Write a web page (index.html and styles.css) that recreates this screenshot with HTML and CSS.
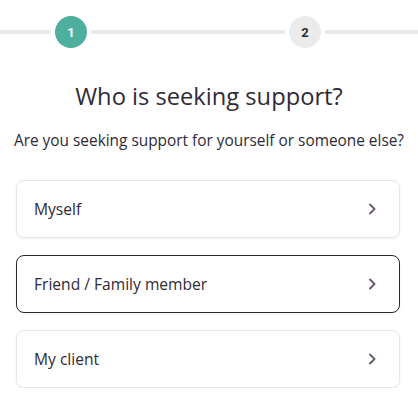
FILE: index.html
```html
<!DOCTYPE html>
<html lang="en">
<head>
<meta charset="utf-8">
<title>Who is seeking support?</title>
<link rel="stylesheet" href="styles.css">
</head>
<body>
<div class="page">
  <div class="stepper">
    <div class="line line-start"></div>
    <div class="step step-active">1</div>
    <div class="line line-mid"></div>
    <div class="step">2</div>
    <div class="line line-end"></div>
  </div>
  <h1 class="title">Who is seeking support?</h1>
  <p class="subtitle">Are you seeking support for yourself or someone else?</p>
  <div class="options">
    <button class="option">
      <span>Myself</span>
      <svg class="chev" width="10" height="14" viewBox="0 0 10 14"><path d="M3 2.5 L7.5 7 L3 11.5" fill="none" stroke="#6d5b74" stroke-width="2" stroke-linecap="round" stroke-linejoin="round"/></svg>
    </button>
    <button class="option option-selected">
      <span>Friend / Family member</span>
      <svg class="chev" width="10" height="14" viewBox="0 0 10 14"><path d="M3 2.5 L7.5 7 L3 11.5" fill="none" stroke="#6d5b74" stroke-width="2" stroke-linecap="round" stroke-linejoin="round"/></svg>
    </button>
    <button class="option">
      <span>My client</span>
      <svg class="chev" width="10" height="14" viewBox="0 0 10 14"><path d="M3 2.5 L7.5 7 L3 11.5" fill="none" stroke="#6d5b74" stroke-width="2" stroke-linecap="round" stroke-linejoin="round"/></svg>
    </button>
  </div>
</div>
</body>
</html>
```
FILE: styles.css
```css
* { box-sizing: border-box; }
html, body { margin: 0; padding: 0; background: #ffffff; }
body { font-family: "Open Sans", "Lato", sans-serif; color: #2f2a36; }
.page { width: 418px; padding-top: 16px; }
.stepper { display: flex; align-items: center; height: 32px; }
.line { height: 4px; background: #e9e9ea; }
.line-start { width: 51px; margin-right: 4px; }
.line-mid { flex: 1; margin: 0 4px; }
.line-end { width: 93px; margin-left: 4px; }
.step {
  width: 32px; height: 32px; border-radius: 50%;
  background: #ebebec; color: #2c2c2c;
  display: flex; align-items: center; justify-content: center;
  font-family: "Roboto", sans-serif; font-weight: 700; font-size: 13px;
}
.step-active { background: #4daf9e; color: #ffffff; }
.title {
  margin: 33px 0 0; text-align: center;
  font-size: 23.7px; font-weight: 400; line-height: 30px; color: #2f2a36;
}
.subtitle {
  margin: 20px 0 0; text-align: center;
  font-size: 15.4px; line-height: 20px; color: #2f2a36;
}
.options { display: flex; flex-direction: column; gap: 17px; padding: 0 18px 0 16px; margin-top: 29px; }
.option {
  display: flex; align-items: center; justify-content: space-between;
  height: 58px; padding: 0 22px 0 17px;
  background: #fff; border: 1px solid #e6e6e8; border-radius: 8px;
  box-shadow: 0 1px 3px rgba(0,0,0,0.06);
  font-family: inherit; font-size: 15.6px; color: #2f2a36; text-align: left;
}
.option-selected { border-color: #2b2730; }
.chev { display: block; }
```
